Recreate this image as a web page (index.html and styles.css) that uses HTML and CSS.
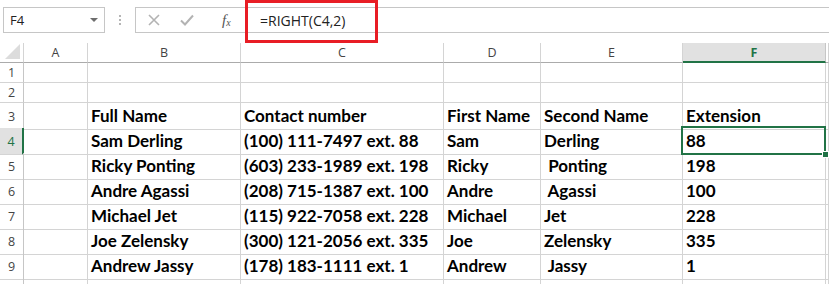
FILE: index.html
```html
<!DOCTYPE html>
<html lang="en">
<head>
    <meta charset="UTF-8" />
    <title>RIGHT formula</title>
    <link rel="stylesheet" href="styles.css">
</head>
<body>
    <div class="formula-bar">
        <div class="name-box">
            <span>F4</span>
            <span class="caret"></span>
        </div>
        <div class="grip">
            <i></i><i></i><i></i>
        </div>
        <div class="formula-box">
            <div class="tools">
                <svg class="tool" width="12" height="12" viewBox="0 0 12 12"><path d="M1 1L11 11M11 1L1 11" stroke="#b3b3b3" stroke-width="1.6" fill="none"/></svg>
                <svg class="tool" width="14" height="12" viewBox="0 0 14 12"><path d="M1 6.5L5 10.5L13 1.5" stroke="#b3b3b3" stroke-width="2" fill="none"/></svg>
                <span class="fx">f<sub>x</sub></span>
            </div>
            <div class="formula-text">=RIGHT(C4,2)</div>
        </div>
        <div class="highlight"></div>
    </div>

    <div class="sheet">
        <div class="row head">
            <div class="corner"><span class="tri"></span></div>
            <div class="col">A</div>
            <div class="col">B</div>
            <div class="col">C</div>
            <div class="col">D</div>
            <div class="col">E</div>
            <div class="col sel">F</div>
            <div class="col"></div>
        </div>
        <div class="row short">
            <div class="num">1</div><div></div><div></div><div></div><div></div><div></div><div></div><div></div>
        </div>
        <div class="row short">
            <div class="num">2</div><div></div><div></div><div></div><div></div><div></div><div></div><div></div>
        </div>
        <div class="row">
            <div class="num">3</div><div></div>
            <div class="cell">Full Name</div>
            <div class="cell">Contact number</div>
            <div class="cell">First Name</div>
            <div class="cell">Second Name</div>
            <div class="cell">Extension</div>
            <div></div>
        </div>
        <div class="row">
            <div class="num sel">4</div><div></div>
            <div class="cell">Sam Derling</div>
            <div class="cell">(100) 111-7497 ext. 88</div>
            <div class="cell">Sam</div>
            <div class="cell">Derling</div>
            <div class="cell active">88</div>
            <div></div>
        </div>
        <div class="row">
            <div class="num">5</div><div></div>
            <div class="cell">Ricky Ponting</div>
            <div class="cell">(603) 233-1989 ext. 198</div>
            <div class="cell">Ricky</div>
            <div class="cell"> Ponting</div>
            <div class="cell">198</div>
            <div></div>
        </div>
        <div class="row">
            <div class="num">6</div><div></div>
            <div class="cell">Andre Agassi</div>
            <div class="cell">(208) 715-1387 ext. 100</div>
            <div class="cell">Andre</div>
            <div class="cell"> Agassi</div>
            <div class="cell">100</div>
            <div></div>
        </div>
        <div class="row">
            <div class="num">7</div><div></div>
            <div class="cell">Michael Jet</div>
            <div class="cell">(115) 922-7058 ext. 228</div>
            <div class="cell">Michael</div>
            <div class="cell">Jet</div>
            <div class="cell">228</div>
            <div></div>
        </div>
        <div class="row">
            <div class="num">8</div><div></div>
            <div class="cell">Joe Zelensky</div>
            <div class="cell">(300) 121-2056 ext. 335</div>
            <div class="cell">Joe</div>
            <div class="cell">Zelensky</div>
            <div class="cell">335</div>
            <div></div>
        </div>
        <div class="row">
            <div class="num">9</div><div></div>
            <div class="cell">Andrew Jassy</div>
            <div class="cell">(178) 183-1111 ext. 1</div>
            <div class="cell">Andrew</div>
            <div class="cell"> Jassy</div>
            <div class="cell">1</div>
            <div></div>
        </div>
        <div class="row tail">
            <div class="num"></div><div></div><div></div><div></div><div></div><div></div><div></div><div></div>
        </div>
    </div>
</body>
</html>
```

FILE: styles.css
```css
body {
    margin: 0;
    background: white;
    font-family: "Open Sans", "Noto Sans", sans-serif;
    overflow: hidden;
}

/* formula bar */

.formula-bar {
    position: relative;
    height: 43px;
    display: flex;
    align-items: flex-start;
    padding-top: 7px;
    box-sizing: border-box;
}

.name-box {
    margin-left: 3px;
    width: 102px;
    height: 26px;
    box-sizing: border-box;
    border: 1px solid #c6c6c6;
    display: flex;
    align-items: center;
    justify-content: space-between;
    padding: 0 6px 0 6px;
    font-size: 13px;
    color: #222;
}

.caret {
    width: 0;
    height: 0;
    border-left: 4px solid transparent;
    border-right: 4px solid transparent;
    border-top: 4px solid #6d6d6d;
}

.grip {
    width: 30px;
    height: 26px;
    display: flex;
    flex-direction: column;
    align-items: center;
    justify-content: center;
    gap: 2px;
}

    .grip i {
        width: 2px;
        height: 2px;
        background: #b5b5b5;
    }

.formula-box {
    flex: 1;
    height: 26px;
    box-sizing: border-box;
    border: 1px solid #c6c6c6;
    border-right: none;
    display: flex;
    align-items: center;
}

.tools {
    width: 112px;
    height: 100%;
    box-sizing: border-box;
    border-right: 1px solid #c6c6c6;
    display: flex;
    align-items: center;
    padding-left: 12px;
    gap: 20px;
}

.fx {
    font-family: "Liberation Serif", serif;
    font-style: italic;
    font-size: 15px;
    color: #555;
    margin-left: 8px;
}

    .fx sub {
        font-size: 10px;
        vertical-align: -1px;
    }

.formula-text {
    padding-left: 12px;
    font-size: 14px;
    color: #222;
}

.highlight {
    position: absolute;
    left: 245px;
    top: 0;
    width: 133px;
    height: 43px;
    box-sizing: border-box;
    border: 3px solid #e81d25;
}

/* sheet grid */

.row {
    display: grid;
    grid-template-columns: 24px 64px 153px 203px 97px 142px 143px 1fr;
    height: 25px;
}

    .row > div {
        box-sizing: border-box;
        border-right: 1px solid #d4d4d4;
        border-bottom: 1px solid #d4d4d4;
        white-space: pre;
    }

.row.short {
    height: 20px;
}

.row.tail {
    height: 7px;
}

.row.head {
    height: 20px;
}

    .row.head > div {
        border-bottom-color: #ababab;
        font-size: 12.5px;
        color: #444;
        display: flex;
        align-items: center;
        justify-content: center;
    }

.corner {
    position: relative;
}

.tri {
    position: absolute;
    right: 3px;
    bottom: 3px;
    width: 0;
    height: 0;
    border-left: 15px solid transparent;
    border-bottom: 15px solid #dcdcdc;
}

.row.head > .col.sel {
    background: #e1e1e1;
    color: #217346;
    font-weight: bold;
    border-bottom: 2px solid #217346;
    border-right-color: #c6c6c6;
}

.num {
    font-size: 12.5px;
    color: #444;
    display: flex;
    align-items: center;
    justify-content: center;
    border-right-color: #c6c6c6 !important;
}

.num.sel {
    background: #e1e1e1;
    color: #217346;
    border-right: 2px solid #217346 !important;
}

.cell {
    font-family: "Lato", sans-serif;
    font-weight: bold;
    font-size: 17px;
    color: #000;
    padding-left: 3px;
    line-height: 26px;
}

.cell.active {
    position: relative;
}

    .cell.active::after {
        content: "";
        position: absolute;
        left: -2px;
        top: -2px;
        right: -1px;
        bottom: -1px;
        border: 2px solid #217346;
    }

    .cell.active::before {
        content: "";
        position: absolute;
        right: -4px;
        bottom: -4px;
        width: 5px;
        height: 5px;
        background: #217346;
        border: 1px solid white;
        z-index: 1;
    }
```
